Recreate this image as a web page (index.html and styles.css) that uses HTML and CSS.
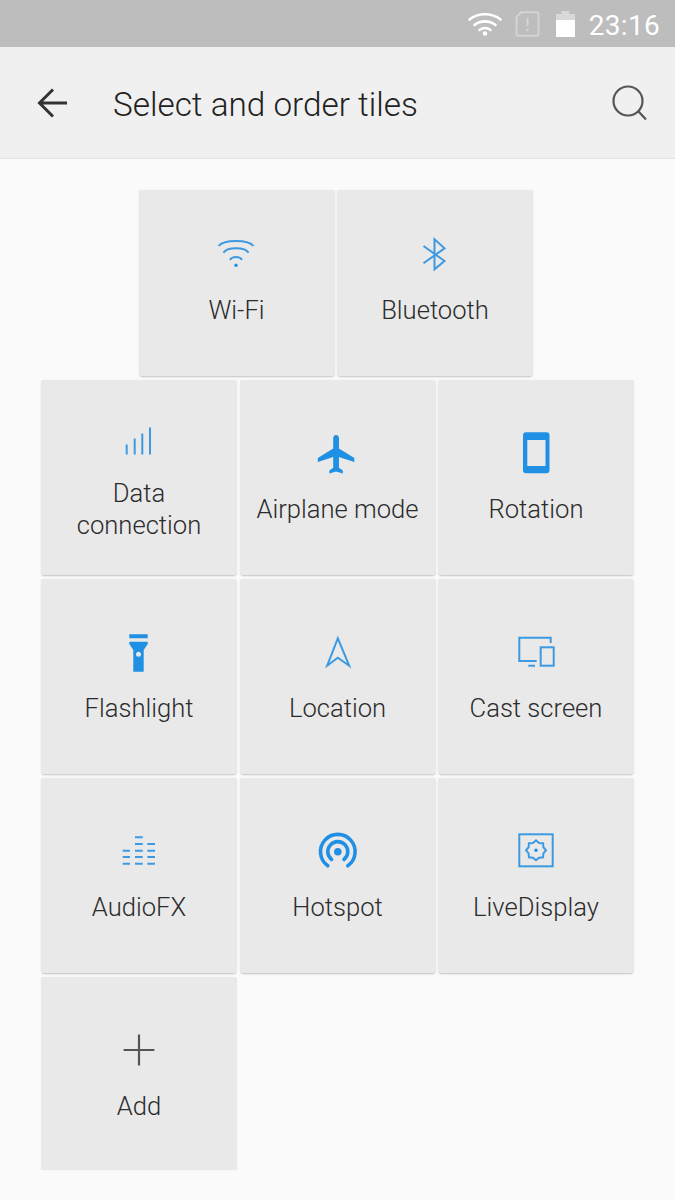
FILE: index.html
```html
<!DOCTYPE html>
<html lang="en">
<head>
    <meta charset="UTF-8">
    <meta name="viewport" content="width=device-width, initial-scale=1.0">
    <title>Select and order tiles</title>
    <link rel="stylesheet" href="styles.css">
</head>
<body>
    <div class="status-bar">
        <svg class="status-wifi" width="34" height="24" viewBox="0 0 34 24">
            <path d="M1.5 7.5C10 .5 24 .5 32.5 7.5M6.5 13C12.5 8.2 21.5 8.2 27.5 13M11.5 18C14.8 15.6 19.2 15.6 22.5 18" />
            <circle cx="17" cy="21.5" r="2.2" />
        </svg>
        <svg class="status-sim" width="25" height="26" viewBox="0 0 25 26">
            <path d="M6 1.2H21.5a2 2 0 0 1 2 2V22.8a2 2 0 0 1-2 2H3.5a2 2 0 0 1-2-2V6z" />
            <path d="M12.5 7v8M12.5 17.5v2.5" />
        </svg>
        <svg class="status-battery" width="19" height="26" viewBox="0 0 19 26">
            <path class="battery-empty" d="M5.5 0h8v3h5.5v6H0V3h5.500z" />
            <path class="battery-full" d="M0 9h19v17H0z" />
        </svg>
        <span class="status-time">23:16</span>
    </div>

    <header class="app-bar">
        <svg class="back-icon" width="32" height="32" viewBox="0 0 32 32">
            <path d="M30 16H2.500M16 2.500L2.500 16L16 29.500" />
        </svg>
        <h1 class="app-title">Select and order tiles</h1>
        <svg class="search-icon" width="36" height="36" viewBox="0 0 36 36">
            <circle cx="16" cy="16" r="14.500" />
            <path d="M26.500 26.500L34 34.500" />
        </svg>
    </header>

    <main class="tiles">
        <div class="tile-row-top">
            <div class="tile tile-top">
                <svg class="tile-icon line" viewBox="0 0 44 44">
                    <path d="M3.500 14C8.500 7.200 33.500 7.200 38.500 14M8.500 20.700C12 14.800 30 14.800 33.500 20.700M15 28C17 24 25 24 27 28" />
                    <circle class="solid" cx="21" cy="33.300" r="1.700" />
                </svg>
                <span class="tile-label">Wi-Fi</span>
            </div>
            <div class="tile tile-top">
                <svg class="tile-icon line" viewBox="0 0 44 44">
                    <path d="M10.500 14L31.500 29L21.500 37.300V7.300L31.500 16.300L10.500 31.300" />
                </svg>
                <span class="tile-label">Bluetooth</span>
            </div>
        </div>

        <div class="tile-grid">
            <div class="tile">
                <svg class="tile-icon line" viewBox="0 0 44 44">
                    <path d="M9.700 39.500V29.500M17.700 39.500V23.500M25.300 39.500V18.500M33 39.500V12.500" />
                </svg>
                <span class="tile-label label-narrow">Data connection</span>
            </div>
            <div class="tile">
                <svg class="tile-icon" viewBox="0 0 44 44">
                    <path class="solid" transform="translate(-2 .2) scale(1.920)" d="M21 16v-2l-8-5V3.500c0-.83-.67-1.500-1.500-1.500S10 2.670 10 3.500V9l-8 5v2l8-2.500V19l-2 1.500V22l3.500-1 3.500 1v-1.500L13 19v-5.500l8 2.500z" />
                </svg>
                <span class="tile-label">Airplane mode</span>
            </div>
            <div class="tile">
                <svg class="tile-icon" viewBox="0 0 44 44">
                    <path class="solid" fill-rule="evenodd" d="M12 1.300H32.500a3 3 0 0 1 3 3V39.300a3 3 0 0 1-3 3H12a3 3 0 0 1-3-3V4.300a3 3 0 0 1 3-3zM13.300 9V35H31.500V9z" />
                </svg>
                <span class="tile-label">Rotation</span>
            </div>

            <div class="tile">
                <svg class="tile-icon" viewBox="0 0 44 44">
                    <path class="solid" fill-rule="evenodd" d="M12.300 4.300H30.700V8.300H12.300zM12.300 11.700H30.700V14L26.700 20V41.700H16.300V20L12.300 14zM21.500 21.800a2.500 2.500 0 1 0 0 5a2.500 2.500 0 1 0 0-5z" />
                </svg>
                <span class="tile-label">Flashlight</span>
            </div>
            <div class="tile">
                <svg class="tile-icon line" viewBox="0 0 44 44">
                    <path d="M21.800 8.300L11.200 35.700L21.800 27.700L33.200 35.700z" />
                </svg>
                <span class="tile-label">Location</span>
            </div>
            <div class="tile">
                <svg class="tile-icon line" viewBox="0 0 44 44">
                    <path d="M36.700 13V7.700H5.300V31H22.700M14.300 35.700H21" />
                    <rect x="26.700" y="17.300" width="13" height="18.400" />
                </svg>
                <span class="tile-label">Cast screen</span>
            </div>

            <div class="tile">
                <svg class="tile-icon line" viewBox="0 0 44 44">
                    <path d="M18 8.300H25.700M18 15H25.700M30.300 15H38M5.700 21.700H13M18 21.700H25.700M30.300 21.700H38M5.700 28H13M18 28H25.700M30.300 28H38M5.700 34.700H13M18 34.700H25.700M30.300 34.700H38" />
                </svg>
                <span class="tile-label">AudioFX</span>
            </div>
            <div class="tile">
                <svg class="tile-icon thick" viewBox="0 0 44 44">
                    <path d="M11.800 36.800A17.300 17.300 0 1 1 31.800 36.800M15.600 30.500A10 10 0 1 1 28 30.500" />
                    <circle class="solid" cx="21.800" cy="22.700" r="3.800" />
                </svg>
                <span class="tile-label">Hotspot</span>
            </div>
            <div class="tile">
                <svg class="tile-icon line" viewBox="0 0 44 44">
                    <rect x="5.300" y="5.300" width="33.400" height="32" />
                    <path d="M32 21.300L29.390 24.360L29.070 28.370L25.060 28.690L22 31.300L18.940 28.690L14.930 28.370L14.610 24.360L12 21.300L14.610 18.240L14.930 14.230L18.940 13.910L22 11.300L25.060 13.910L29.070 14.230L29.390 18.240z" />
                    <circle class="solid" cx="22" cy="21.300" r="1.700" />
                </svg>
                <span class="tile-label">LiveDisplay</span>
            </div>

            <div class="tile tile-add">
                <svg class="tile-icon add-icon" viewBox="0 0 44 44">
                    <path d="M6.600 22H37.400M22 6.600V37.400" />
                </svg>
                <span class="tile-label">Add</span>
            </div>
        </div>
    </main>
</body>
</html>
```

FILE: styles.css
```css
* {
    box-sizing: border-box;
}
body {
    font-family: 'Roboto', 'Liberation Sans', sans-serif;
    background: #fafafa;
    margin: 0;
    padding: 0;
    height: 1200px;
    overflow: hidden;
}
.status-bar {
    height: 47px;
    background: #bdbdbd;
    display: flex;
    justify-content: flex-end;
    align-items: center;
    padding-right: 15px;
}
.status-wifi {
    margin-right: 13px;
    fill: #fff;
}
.status-wifi path {
    fill: none;
    stroke: #fff;
    stroke-width: 2.6;
    stroke-linecap: round;
}
.status-sim {
    margin-right: 16px;
    fill: none;
    stroke: #d4d4d4;
    stroke-width: 2;
}
.status-battery {
    margin-right: 14px;
}
.battery-empty {
    fill: #d9d9d9;
}
.battery-full {
    fill: #fff;
}
.status-time {
    color: #fff;
    font-size: 28px;
    letter-spacing: 0.3px;
    margin-top: 4px;
}
.app-bar {
    height: 112px;
    background: #f0f0f0;
    border-bottom: 1px solid #e6e6e6;
    display: flex;
    align-items: center;
    padding: 0 27px 0 37px;
}
.back-icon {
    fill: none;
    stroke: #333;
    stroke-width: 3;
    flex-shrink: 0;
}
.app-title {
    flex: 1;
    margin: 4px 0 0 44px;
    font-size: 33.3px;
    font-weight: 300;
    color: #222;
}
.search-icon {
    fill: none;
    stroke: #555;
    stroke-width: 2.2;
}
.tiles {
    padding: 31px 41px 0;
}
.tile-row-top {
    display: flex;
    gap: 2.500px;
    padding-left: 97.5px;
    margin-bottom: 4px;
}
.tile-grid {
    display: grid;
    grid-template-columns: repeat(3, 196px);
    column-gap: 2.500px;
    row-gap: 4px;
}
.tile {
    width: 196px;
    height: 195px;
    background: #e9e9e9;
    border-radius: 3px;
    box-shadow: 0 2px 2px -1px rgba(0, 0, 0, 0.22), 0 0 1px rgba(0, 0, 0, 0.12);
    display: flex;
    flex-direction: column;
    align-items: center;
    justify-content: center;
    gap: 18px;
}
.tile-top {
    height: 186px;
    padding-bottom: 9px;
    border-radius: 0 0 3px 3px;
}
.tile-add {
    height: 193px;
    padding-top: 2px;
    border-radius: 3px 3px 0 0;
    box-shadow: 0 0 1px rgba(0, 0, 0, 0.12);
}
.tile-icon {
    width: 44px;
    height: 44px;
    flex-shrink: 0;
}
.tile-icon.line {
    fill: none;
    stroke: #3d9ae2;
    stroke-width: 2;
}
.tile-icon.thick {
    fill: none;
    stroke: #2090e4;
    stroke-width: 3.600;
    stroke-linecap: round;
}
.tile-icon .solid {
    fill: #2090e4;
    stroke: none;
}
.add-icon {
    fill: none;
    stroke: #555;
    stroke-width: 2.200;
}
.tile-label {
    font-size: 25.6px;
    font-weight: 300;
    line-height: 32px;
    color: #2c2c2c;
    text-align: center;
    width: 180px;
}
.label-narrow {
    width: 150px;
}
```
